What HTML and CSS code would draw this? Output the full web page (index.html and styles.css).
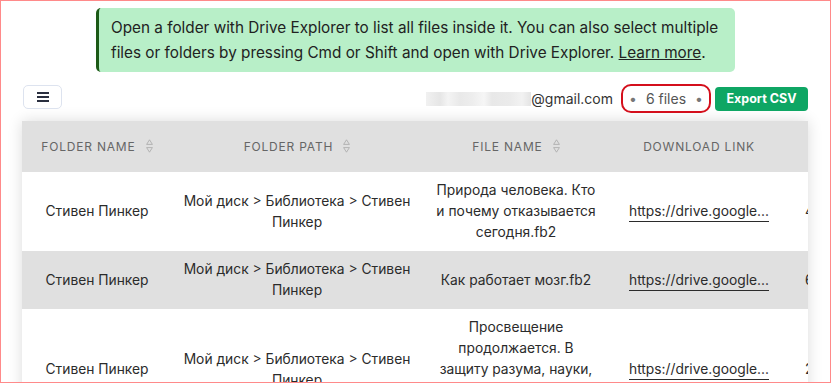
FILE: index.html
```html
<!DOCTYPE html>
<html lang="en">
<head>
    <meta charset="UTF-8">
    <meta name="viewport" content="width=device-width, initial-scale=1.0">
    <title>Drive Explorer - Files</title>
    <link rel="stylesheet" href="styles.css">
</head>
<body>
    <div class="frame">
        <div class="notice">
            <p>Open a folder with Drive Explorer to list all files inside it. You can also select multiple files or folders by pressing Cmd or Shift and open with Drive Explorer. <a href="#">Learn more</a>.</p>
        </div>

        <div class="toolbar">
            <button class="menu-button" type="button" aria-label="Menu">
                <span></span><span></span><span></span>
            </button>
            <div class="account">
                <span class="blurred"></span>@gmail.com
            </div>
            <div class="file-count">
                <span class="dot">&bull;</span>
                <span>6 files</span>
                <span class="dot">&bull;</span>
            </div>
            <button class="export-button" type="button">Export CSV</button>
        </div>

        <div class="table-wrap">
            <table class="files-table">
                <colgroup>
                    <col class="col-folder">
                    <col class="col-path">
                    <col class="col-file">
                    <col class="col-link">
                    <col class="col-size">
                </colgroup>
                <thead>
                    <tr>
                        <th>Folder name <svg class="sort" width="7" height="14" viewBox="0 0 7 14"><path d="M3.5 0.8 L6.4 5.4 H0.6 Z M3.5 13.2 L6.4 8.6 H0.6 Z" fill="none" stroke="#a8a8a8" stroke-width="0.8"/></svg></th>
                        <th>Folder path <svg class="sort" width="7" height="14" viewBox="0 0 7 14"><path d="M3.5 0.8 L6.4 5.4 H0.6 Z M3.5 13.2 L6.4 8.6 H0.6 Z" fill="none" stroke="#a8a8a8" stroke-width="0.8"/></svg></th>
                        <th>File name <svg class="sort" width="7" height="14" viewBox="0 0 7 14"><path d="M3.5 0.8 L6.4 5.4 H0.6 Z M3.5 13.2 L6.4 8.6 H0.6 Z" fill="none" stroke="#a8a8a8" stroke-width="0.8"/></svg></th>
                        <th>Download link</th>
                        <th>Size</th>
                    </tr>
                </thead>
                <tbody>
                    <tr>
                        <td>Стивен Пинкер</td>
                        <td>Мой диск &gt; Библиотека &gt; Стивен Пинкер</td>
                        <td class="file">Природа человека. Кто и почему отказывается сегодня.fb2</td>
                        <td><a href="#" class="link">https://drive.google...</a></td>
                        <td class="size">4.1 MB</td>
                    </tr>
                    <tr class="striped">
                        <td>Стивен Пинкер</td>
                        <td>Мой диск &gt; Библиотека &gt; Стивен Пинкер</td>
                        <td class="file">Как работает мозг.fb2</td>
                        <td><a href="#" class="link">https://drive.google...</a></td>
                        <td class="size">6.3 MB</td>
                    </tr>
                    <tr>
                        <td>Стивен Пинкер</td>
                        <td>Мой диск &gt; Библиотека &gt; Стивен Пинкер</td>
                        <td class="file">Просвещение продолжается. В<br>защиту разума, науки, гуманизма и прогресса.fb2</td>
                        <td><a href="#" class="link">https://drive.google...</a></td>
                        <td class="size">2.8 MB</td>
                    </tr>
                </tbody>
            </table>
        </div>
    </div>
</body>
</html>
```

FILE: styles.css
```css
body {
    margin: 0;
    padding: 0;
    background-color: #ffffff;
    font-family: Inter, "Noto Sans", Arial, sans-serif;
    color: #2b2b2b;
}

.frame {
    box-sizing: border-box;
    width: 831px;
    height: 383px;
    border: 1px solid #ff8a8a;
    padding: 7px 21px 0 21px;
    overflow: hidden;
}

.notice {
    width: 639px;
    margin: 0 auto;
    box-sizing: border-box;
    background-color: #b8efc8;
    border-left: 3px solid #1c5a16;
    border-radius: 5px;
    padding: 7px 8px 7px 12px;
}

.notice p {
    margin: 0;
    font-size: 15.3px;
    line-height: 25px;
    color: #222;
}

.notice a {
    color: #222;
    text-decoration: underline;
}

.toolbar {
    display: flex;
    align-items: center;
    margin-top: 12px;
    height: 29px;
}

.menu-button {
    width: 39px;
    height: 24px;
    margin-left: 1px;
    margin-right: auto;
    align-self: flex-start;
    margin-top: 1px;
    background: #fff;
    border: 1px solid #dde3ef;
    border-radius: 5px;
    display: flex;
    flex-direction: column;
    align-items: center;
    justify-content: center;
    gap: 2px;
    padding: 0;
}

.menu-button span {
    display: block;
    width: 12px;
    height: 2px;
    background-color: #2a2f3f;
}

.account {
    display: flex;
    align-items: center;
    font-size: 14px;
    color: #333;
}

.blurred {
    display: inline-block;
    width: 105px;
    height: 14px;
    background: linear-gradient(90deg, #f1f1f1 0, #e6e6e6 14px, #f4f4f4 22px, #e9e9e9 34px, #ededed 46px, #f6f6f6 58px, #e8e8e8 66px, #ebebeb 84px, #f2f2f2 96px, #e4e4e4 105px);
}

.file-count {
    display: flex;
    align-items: center;
    justify-content: space-between;
    box-sizing: border-box;
    width: 90px;
    height: 29px;
    margin-left: 8px;
    padding: 0 6px;
    border: 2px solid #d40f1c;
    border-radius: 10px;
    font-size: 14px;
    color: #555;
}

.file-count .dot {
    color: #777;
    font-size: 14px;
}

.export-button {
    height: 24px;
    width: 93px;
    margin-left: 4px;
    margin-right: 1px;
    padding: 0;
    border: none;
    border-radius: 4px;
    background-color: #0ea664;
    color: #fff;
    font-family: Inter, Arial, sans-serif;
    font-weight: 700;
    font-size: 12.5px;
    cursor: pointer;
}

.table-wrap {
    margin-top: 8px;
    width: 786px;
    overflow: hidden;
    box-shadow: 0 0 14px rgba(0, 0, 0, 0.14);
}

.files-table {
    table-layout: fixed;
    border-collapse: collapse;
    width: 900px;
    font-size: 13.8px;
    color: #2b2b2b;
}

.col-folder { width: 150px; }
.col-path { width: 250px; }
.col-file { width: 188px; }
.col-link { width: 178px; }
.col-size { width: 134px; }

.files-table th {
    height: 51px;
    padding: 0 6px;
    background-color: #e0e0e0;
    color: #666;
    font-weight: 400;
    font-size: 12px;
    letter-spacing: 0.8px;
    text-transform: uppercase;
    text-align: center;
    white-space: nowrap;
}

.files-table th .sort {
    vertical-align: -2px;
    margin-left: 6px;
}

.files-table td {
    padding: 8px 7px;
    line-height: 21px;
    text-align: center;
    vertical-align: middle;
}

.files-table td.file {
    padding-left: 10px;
    padding-right: 10px;
}

.files-table tr.striped td {
    background-color: #e0e0e0;
}

.files-table td.size {
    text-align: left;
    padding-left: 17px;
}

.link {
    display: inline-block;
    white-space: nowrap;
    vertical-align: middle;
    color: #2b2b2b;
    text-decoration: none;
    border-bottom: 1px solid #2b2b2b;
    line-height: 20px;
}
```
